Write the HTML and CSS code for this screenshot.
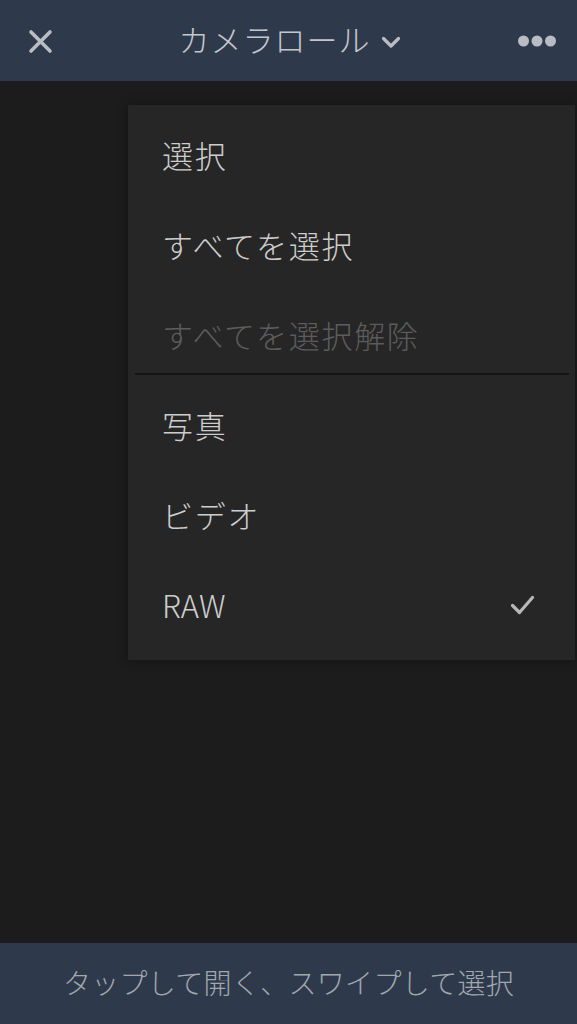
FILE: index.html
```html
<!DOCTYPE html>
<html lang="ja">
<head>
<meta charset="utf-8">
<link rel="stylesheet" href="styles.css">
</head>
<body>
<div class="app">
  <header class="bar top">
    <svg class="close" width="577" height="81" viewBox="0 0 577 81">
      <path d="M31 32 L50 51 M50 32 L31 51" stroke="#b9bdc3" stroke-width="3.6" stroke-linecap="round" fill="none"/>
      <path d="M383.5 38.5 L391 46 L398.5 38.5" stroke="#b9bdc3" stroke-width="3.2" stroke-linecap="round" stroke-linejoin="round" fill="none"/>
      <circle cx="523.5" cy="41" r="5.5" fill="#b9bdc3"/>
      <circle cx="537" cy="41" r="5.5" fill="#b9bdc3"/>
      <circle cx="550.5" cy="41" r="5.5" fill="#b9bdc3"/>
    </svg>
    <div class="title">カメラロール</div>
  </header>
  <main class="content">
    <div class="menu">
      <div class="item">選択</div>
      <div class="item">すべてを選択</div>
      <div class="item disabled">すべてを選択解除</div>
      <div class="sep"></div>
      <div class="item">写真</div>
      <div class="item">ビデオ</div>
      <div class="item">
        <span class="latin">RAW</span>
        <svg class="check" width="26" height="22" viewBox="0 0 26 22">
          <path d="M2.5 11.5 L9.5 18.5 L22.5 3.5" stroke="#b8b8b8" stroke-width="3.2" stroke-linecap="round" stroke-linejoin="round" fill="none"/>
        </svg>
      </div>
    </div>
  </main>
  <footer class="bar bottom">
    <div class="hint">タップして開く、スワイプして選択</div>
  </footer>
</div>
</body>
</html>
```
FILE: styles.css
```css
html, body {
  margin: 0;
  padding: 0;
  background: #1b1b1b;
}
body {
  font-family: "Noto Sans CJK JP", "Noto Sans", sans-serif;
  font-weight: 300;
}
.app {
  width: 577px;
  height: 1024px;
  display: flex;
  flex-direction: column;
  overflow: hidden;
}
.bar {
  height: 81px;
  flex: 0 0 81px;
  background: #2e3a4c;
  position: relative;
  display: flex;
  align-items: center;
  justify-content: center;
}
.close {
  position: absolute;
  left: 0;
  top: 0;
}
.title {
  position: relative;
  font-size: 31px;
  color: #c3c6cb;
  margin-left: -28px;
  margin-top: -4px;
  letter-spacing: 1px;
}
.content {
  flex: 1;
  position: relative;
  background: #1c1c1c;
}
.menu {
  position: absolute;
  top: 24px;
  left: 128px;
  width: 447px;
  background: #262626;
  padding: 7px 0 8px;
  box-shadow: 0 0 10px rgba(0,0,0,0.35);
}
.item {
  height: 90px;
  display: flex;
  align-items: center;
  justify-content: space-between;
  padding: 0 39px 6px 34px;
  box-sizing: border-box;
  font-size: 31px;
  color: #cdcdcd;
  letter-spacing: 1.7px;
}
.item .latin {
  letter-spacing: 0;
}
.item.disabled {
  color: #5c5c5c;
}
.sep {
  height: 2px;
  background: #151515;
  margin: -9px 6px 7px 7px;
}
.check {
  display: block;
  margin-top: 2px;
}
.hint {
  font-size: 28px;
  color: #a2a7ae;
  letter-spacing: 0.3px;
  margin-top: -4px;
}
```
